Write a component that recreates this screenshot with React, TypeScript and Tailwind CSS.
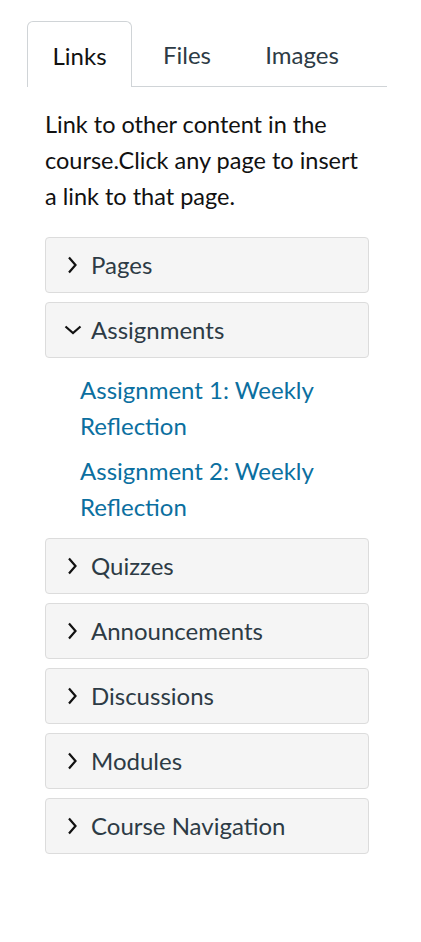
import React from "react";

const Chevron = ({ open }: { open?: boolean }) =>
  open ? (
    <svg width="18" height="18" viewBox="0 0 18 18" className="shrink-0">
      <path d="M1.5 5.5 L9 12 L16.5 5.5" fill="none" stroke="#111" strokeWidth="2.2" />
    </svg>
  ) : (
    <svg width="18" height="18" viewBox="0 0 18 18" className="shrink-0">
      <path d="M5 1.5 L11.5 9 L5 16.5" fill="none" stroke="#111" strokeWidth="2.2" />
    </svg>
  );

const Section = ({ label, open }: { label: string; open?: boolean }) => (
  <div className="h-[56px] rounded-[4px] border border-[#dcdcdc] bg-[#f5f5f5] flex items-center pl-[18px] gap-[9px]">
    <Chevron open={open} />
    <span className="text-[24px] text-[#2d3b45]">{label}</span>
  </div>
);

export default function App() {
  return (
    <div className="w-[421px] h-[942px] bg-white" style={{ fontFamily: "Lato, 'Noto Sans', sans-serif" }}>
      <div className="pt-[22px] pl-[27px] pr-[34px]">
        <div className="flex items-end border-b border-[#d0d4d7] h-[65px]">
          <div className="w-[105px] h-[66px] -mb-px pt-[2px] border border-b-0 border-[#d0d4d7] rounded-t-[6px] bg-white flex items-center justify-center text-[24px] text-[#111]">
            Links
          </div>
          <div className="w-[110px] h-[65px] pt-[2px] flex items-center justify-center text-[24px] text-[#2d3b45]">Files</div>
          <div className="w-[120px] h-[65px] pt-[2px] flex items-center justify-center text-[24px] text-[#2d3b45]">Images</div>
        </div>
      </div>
      <div className="px-[45px] w-[414px]">
        <p className="mt-[19px] text-[23.5px] leading-[36px] text-[#111]">
          Link to other content in the course.Click any page to insert a link to that page.
        </p>
        <div className="mt-[23px] flex flex-col gap-[9px]">
          <Section label="Pages" />
          <div>
            <Section label="Assignments" open />
            <div className="pl-[35px] pt-[14px] pb-[4px] flex flex-col gap-[9px] text-[24px] leading-[36px] text-[#0b6fa0]">
              <div>Assignment 1: Weekly<br />Reflection</div>
              <div>Assignment 2: Weekly<br />Reflection</div>
            </div>
          </div>
          <Section label="Quizzes" />
          <Section label="Announcements" />
          <Section label="Discussions" />
          <Section label="Modules" />
          <Section label="Course Navigation" />
        </div>
      </div>
    </div>
  );
}
